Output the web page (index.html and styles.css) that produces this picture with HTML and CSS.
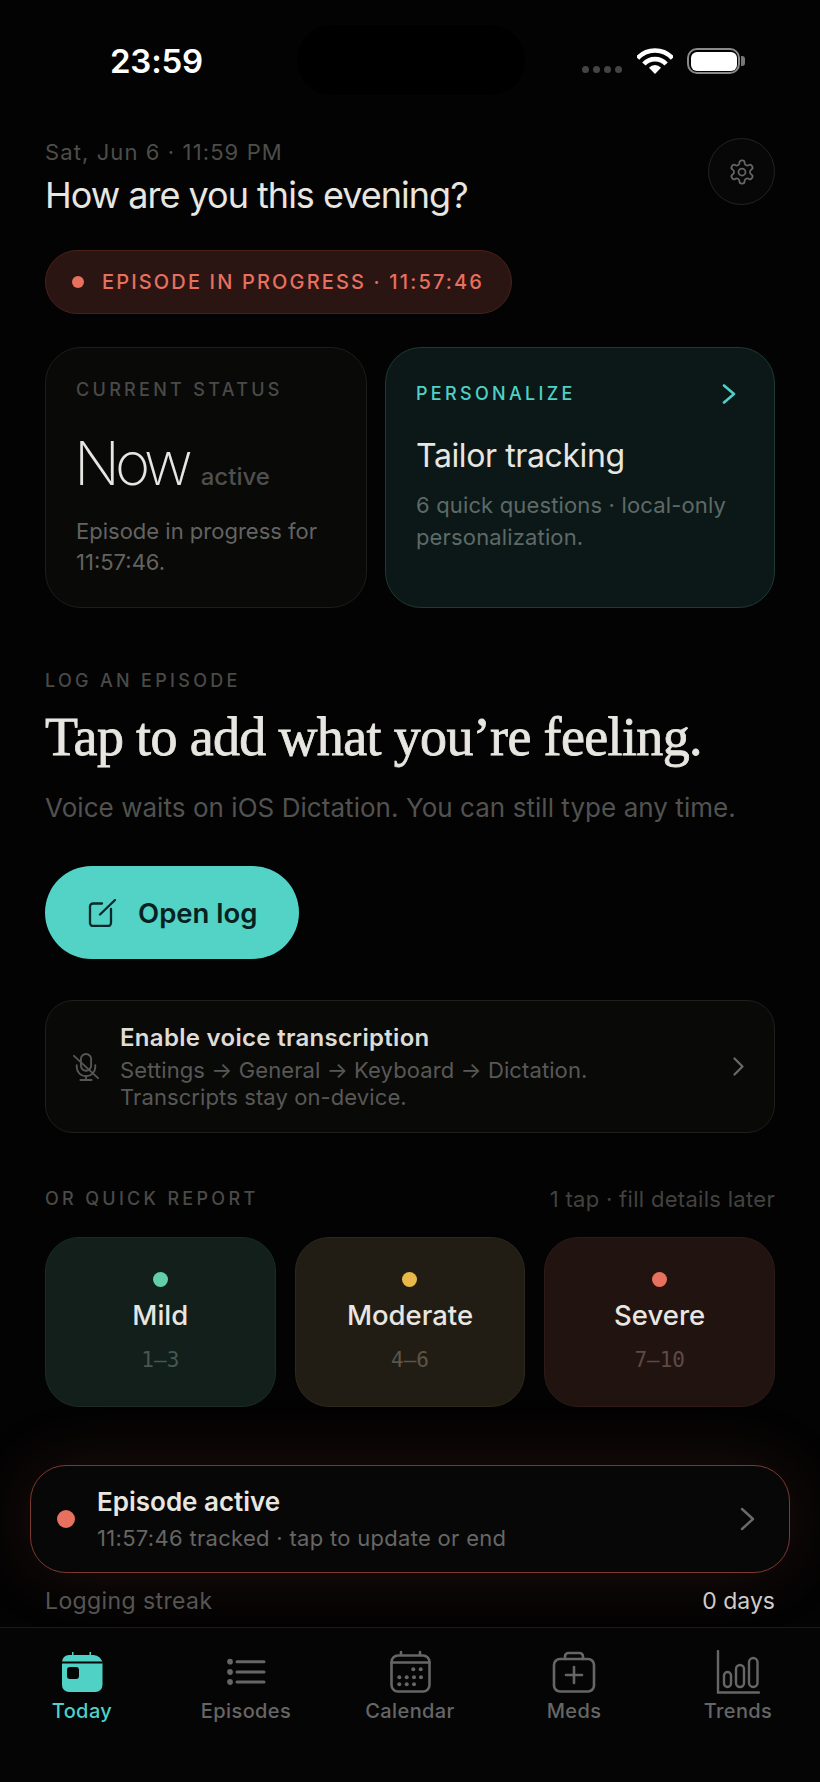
FILE: index.html
```html
<!DOCTYPE html>
<html lang="en">
<head>
    <meta charset="UTF-8">
    <meta name="viewport" content="width=device-width, initial-scale=1.0">
    <title>Today</title>
    <link rel="stylesheet" href="styles.css">
</head>
<body>
    <div class="status-bar">
        <div class="clock">23:59</div>
        <div class="island"></div>
        <div class="status-icons">
            <div class="signal"><span></span><span></span><span></span><span></span></div>
            <svg class="wifi" viewBox="0 0 36 26">
                <path d="M.5 10.300A23.500 23.500 0 0 1 35.500 10.300" fill="none" stroke="#fff" stroke-width="4.600"/>
                <path d="M6.900 16A15 15 0 0 1 29.100 16" fill="none" stroke="#fff" stroke-width="4.600"/>
                <path d="M18 26L12 19.800A8 8 0 0 1 24 19.800Z" fill="#fff"/>
            </svg>
            <div class="battery"><div class="battery-fill"></div></div>
            <div class="battery-nib"></div>
        </div>
    </div>

    <div class="main">
        <div class="header">
            <div>
                <div class="date">Sat, Jun 6 · 11:59 PM</div>
                <div class="greeting">How are you this evening?</div>
            </div>
            <div class="gear-button">
                <svg viewBox="0 0 24 24" width="28" height="28" fill="none" stroke="#666" stroke-width="1.500" stroke-linejoin="round">
                    <path d="M12.220 2h-.440a2 2 0 0 0-2 2v.180a2 2 0 0 1-1 1.730l-.430.250a2 2 0 0 1-2 0l-.150-.080a2 2 0 0 0-2.730.730l-.220.380a2 2 0 0 0 .730 2.730l.150.100a2 2 0 0 1 1 1.720v.510a2 2 0 0 1-1 1.740l-.150.090a2 2 0 0 0-.730 2.730l.220.380a2 2 0 0 0 2.730.730l.150-.080a2 2 0 0 1 2 0l.430.250a2 2 0 0 1 1 1.730V20a2 2 0 0 0 2 2h.440a2 2 0 0 0 2-2v-.180a2 2 0 0 1 1-1.730l.430-.250a2 2 0 0 1 2 0l.150.080a2 2 0 0 0 2.730-.730l.220-.390a2 2 0 0 0-.730-2.730l-.150-.080a2 2 0 0 1-1-1.740v-.500a2 2 0 0 1 1-1.740l.150-.090a2 2 0 0 0 .730-2.730l-.220-.380a2 2 0 0 0-2.730-.730l-.150.080a2 2 0 0 1-2 0l-.430-.250a2 2 0 0 1-1-1.730V4a2 2 0 0 0-2-2z"/>
                    <circle cx="12" cy="12" r="3"/>
                </svg>
            </div>
        </div>

        <div class="episode-pill">
            <span class="pill-dot"></span>
            <span>EPISODE IN PROGRESS · 11:57:46</span>
        </div>

        <div class="cards">
            <div class="card card-status">
                <div class="eyebrow">CURRENT STATUS</div>
                <div class="now-row">
                    <span class="now">Now</span>
                    <span class="now-label">active</span>
                </div>
                <div class="card-text">Episode in progress for 11:57:46.</div>
            </div>
            <div class="card card-personalize">
                <div class="personalize-top">
                    <div class="eyebrow eyebrow-teal">PERSONALIZE</div>
                    <svg viewBox="0 0 14 20" width="14" height="20" fill="none" stroke="#4fd1c5" stroke-width="2.600" stroke-linecap="round" stroke-linejoin="round">
                        <path d="M2 1.500L12 10L2 18.500"/>
                    </svg>
                </div>
                <div class="card-title">Tailor tracking</div>
                <div class="card-text card-text-teal">6 quick questions · local-only personalization.</div>
            </div>
        </div>

        <div class="eyebrow log-eyebrow">LOG AN EPISODE</div>
        <h1 class="log-title">Tap to add what you’re feeling.</h1>
        <div class="log-sub">Voice waits on iOS Dictation. You can still type any time.</div>

        <div class="open-log">
            <svg viewBox="0 0 28 28" width="28" height="28" fill="none" stroke="#07292a" stroke-width="2.300" stroke-linecap="round">
                <path d="M14 4.500H5a3 3 0 0 0-3 3V24a3 3 0 0 0 3 3h15a3 3 0 0 0 3-3V10"/>
                <path d="M12 15.500L27 1"/>
            </svg>
            <span>Open log</span>
        </div>

        <div class="voice-card">
            <svg class="mic" viewBox="0 0 28 30" width="26" height="28" fill="none" stroke="#575757" stroke-width="2" stroke-linecap="round">
                <rect x="8.500" y="1" width="11" height="18" rx="5.500"/>
                <path d="M4 13v2a10 10 0 0 0 20 0v-2"/>
                <path d="M14 25v4M8 29h12"/>
                <path d="M1 3L27 27"/>
            </svg>
            <div class="voice-text">
                <div class="voice-title">Enable voice transcription</div>
                <div class="voice-sub">Settings → General → Keyboard → Dictation.<br>Transcripts stay on-device.</div>
            </div>
            <svg viewBox="0 0 11 19" width="11" height="19" fill="none" stroke="#6a6a6a" stroke-width="2.200" stroke-linecap="round" stroke-linejoin="round">
                <path d="M1.500 1.500L9.500 9.500L1.500 17.500"/>
            </svg>
        </div>

        <div class="quick-header">
            <div class="eyebrow">OR QUICK REPORT</div>
            <div class="quick-note">1 tap · fill details later</div>
        </div>

        <div class="severity-grid">
            <div class="severity severity-mild">
                <span class="severity-dot"></span>
                <div class="severity-name">Mild</div>
                <div class="severity-range">1–3</div>
            </div>
            <div class="severity severity-moderate">
                <span class="severity-dot"></span>
                <div class="severity-name">Moderate</div>
                <div class="severity-range">4–6</div>
            </div>
            <div class="severity severity-severe">
                <span class="severity-dot"></span>
                <div class="severity-name">Severe</div>
                <div class="severity-range">7–10</div>
            </div>
        </div>

        <div class="active-banner">
            <span class="active-dot"></span>
            <div class="active-text">
                <div class="active-title">Episode active</div>
                <div class="active-sub">11:57:46 tracked · tap to update or end</div>
            </div>
            <svg viewBox="0 0 15 24" width="15" height="24" fill="none" stroke="#6a6a6a" stroke-width="2.400" stroke-linecap="round" stroke-linejoin="round">
                <path d="M2 2L13 12L2 22"/>
            </svg>
        </div>

        <div class="streak">
            <span class="streak-label">Logging streak</span>
            <span class="streak-value">0 days</span>
        </div>
    </div>

    <div class="tab-bar">
        <div class="tab tab-active">
            <svg viewBox="0 0 44 44" width="44" height="44">
                <path d="M10 5h2V2h1.500v3h16V2H31v3h2.500a9 9 0 0 1 9 9v21a7 7 0 0 1-7 7H9a7 7 0 0 1-7-7V12a7 7 0 0 1 7-7z" fill="#4fd1c5"/>
                <path d="M2 12.500H42.500" stroke="#050505" stroke-width="1.800"/>
                <rect x="7" y="17" width="12" height="12" rx="3" fill="#050505"/>
            </svg>
            <span>Today</span>
        </div>
        <div class="tab">
            <svg viewBox="0 0 44 44" width="44" height="44" fill="#666" stroke="#666" stroke-width="3" stroke-linecap="round">
                <circle cx="6" cy="11.700" r="1.400"/>
                <circle cx="6" cy="22" r="1.400"/>
                <circle cx="6" cy="32" r="1.400"/>
                <path d="M13 11.700H40M13 22H40M13 32H40"/>
            </svg>
            <span>Episodes</span>
        </div>
        <div class="tab">
            <svg viewBox="0 0 44 44" width="44" height="44" fill="none" stroke="#666" stroke-width="2.600" stroke-linecap="round">
                <rect x="3.500" y="5.500" width="38" height="36" rx="6.500"/>
                <path d="M3.500 12.500H41.500M13 2V5M32 2V5"/>
                <g fill="#666" stroke="none">
                    <circle cx="25.300" cy="19.300" r="2"/>
                    <circle cx="32.700" cy="19.300" r="2"/>
                    <circle cx="11.300" cy="27.300" r="2"/>
                    <circle cx="18.700" cy="27.300" r="2"/>
                    <circle cx="26" cy="27.300" r="2"/>
                    <circle cx="33" cy="27.300" r="2"/>
                    <circle cx="11.300" cy="34.300" r="2"/>
                    <circle cx="18.700" cy="34.300" r="2"/>
                    <circle cx="26" cy="34.300" r="2"/>
                </g>
            </svg>
            <span>Calendar</span>
        </div>
        <div class="tab">
            <svg viewBox="0 0 44 44" width="44" height="44" fill="none" stroke="#666" stroke-width="2.600" stroke-linecap="round">
                <rect x="2" y="9" width="40" height="32.500" rx="6"/>
                <path d="M13 9V6.500a3.500 3.500 0 0 1 3.500-3.500h11a3.500 3.500 0 0 1 3.500 3.500V9"/>
                <path d="M22 17V33M14 25H30"/>
            </svg>
            <span>Meds</span>
        </div>
        <div class="tab">
            <svg viewBox="0 0 44 44" width="44" height="44" fill="none" stroke="#666" stroke-width="2.400" stroke-linecap="round">
                <path d="M2 1V42.500H43"/>
                <rect x="8" y="22" width="7" height="15" rx="3.500"/>
                <rect x="20" y="15" width="8" height="22" rx="4"/>
                <rect x="33" y="8" width="8.500" height="29" rx="4.250"/>
            </svg>
            <span>Trends</span>
        </div>
    </div>
</body>
</html>
```

FILE: styles.css
```css
body {
    font-family: Inter, "Noto Sans", sans-serif;
    background-color: #030303;
    color: #e8e6e1;
    width: 820px;
    height: 1782px;
    margin: 0;
    overflow: hidden;
    display: flex;
    flex-direction: column;
}

/* status bar */
.status-bar {
    position: relative;
    height: 122px;
    flex: none;
    display: flex;
    justify-content: space-between;
    align-items: center;
    padding: 0 75px 0 110px;
}

.clock {
    font-size: 33px;
    font-weight: 600;
    letter-spacing: -0.2px;
    color: #fff;
}

.island {
    position: absolute;
    left: 297px;
    top: 25px;
    width: 228px;
    height: 70px;
    border-radius: 35px;
    background-color: #000;
}

.status-icons {
    display: flex;
    align-items: center;
}

.signal {
    display: flex;
    gap: 4px;
    margin: 16px 15px 0 0;
}

.signal span {
    width: 7px;
    height: 7px;
    border-radius: 50%;
    background-color: #444;
}

.wifi {
    width: 36px;
    height: 26px;
    margin-right: 14px;
}

.battery {
    width: 53px;
    height: 26px;
    box-sizing: border-box;
    border: 2.5px solid #8a8a8a;
    border-radius: 10px;
    padding: 1.5px;
}

.battery-fill {
    height: 100%;
    border-radius: 6px;
    background-color: #fff;
}

.battery-nib {
    width: 4px;
    height: 10px;
    margin-left: 1px;
    border-radius: 0 3px 3px 0;
    background-color: #777;
}

/* main column */
.main {
    flex: 1;
    padding: 16px 45px 0;
    display: flex;
    flex-direction: column;
}

.header {
    display: flex;
    justify-content: space-between;
    align-items: flex-start;
}

.date {
    font-size: 22px;
    line-height: 28px;
    letter-spacing: 1.1px;
    color: #4d4d4b;
}

.greeting {
    margin-top: 8px;
    font-size: 36px;
    line-height: 42px;
    letter-spacing: -1px;
    color: #e8e6e1;
}

.gear-button {
    width: 67px;
    height: 67px;
    box-sizing: border-box;
    border: 1px solid #232322;
    border-radius: 50%;
    background-color: #070707;
    display: flex;
    justify-content: center;
    align-items: center;
}

.episode-pill {
    align-self: flex-start;
    margin-top: 34px;
    width: 467px;
    height: 64px;
    box-sizing: border-box;
    padding-left: 26px;
    display: flex;
    align-items: center;
    gap: 18px;
    border: 1px solid #4a2119;
    border-radius: 32px;
    background-color: #2a1512;
    color: #e8705e;
    font-size: 20px;
    font-weight: 500;
    letter-spacing: 2.15px;
}

.pill-dot {
    width: 12px;
    height: 12px;
    border-radius: 50%;
    background-color: #e8705e;
}

/* two cards */
.cards {
    margin-top: 33px;
    height: 261px;
    flex: none;
    display: grid;
    grid-template-columns: 322px 390px;
    gap: 18px;
}

.card {
    box-sizing: border-box;
    border-radius: 36px;
    padding: 0 30px;
}

.card-status {
    background-color: #090908;
    border: 1px solid #1d1d1b;
    padding-top: 32px;
}

.card-personalize {
    background-color: #0c1817;
    border: 1px solid #1d3a34;
    padding-top: 36px;
}

.eyebrow {
    font-size: 18px;
    line-height: 20px;
    font-weight: 500;
    letter-spacing: 3.3px;
    color: #4a4a48;
}

.eyebrow-teal {
    color: #4fd1c5;
}

.now-row {
    margin-top: 26px;
    display: flex;
    align-items: baseline;
    gap: 13px;
}

.now {
    margin-left: -2px;
    font-size: 60px;
    line-height: 74px;
    font-weight: 200;
    letter-spacing: -5px;
    color: #e8e6e1;
}

.now-label {
    font-size: 24px;
    font-weight: 500;
    color: #504f4d;
}

.card-text {
    margin-top: 16px;
    font-size: 22px;
    line-height: 31px;
    color: #636361;
}

.card-text-teal {
    margin-top: 11px;
    line-height: 32px;
    letter-spacing: 0.15px;
    color: #5d6a67;
}

.personalize-top {
    display: flex;
    justify-content: space-between;
    align-items: center;
    padding-right: 8px;
}

.card-title {
    margin-top: 30px;
    font-size: 32px;
    line-height: 44px;
    letter-spacing: -0.4px;
    color: #e8e6e1;
}

/* log section */
.log-eyebrow {
    margin-top: 63px;
}

.log-title {
    margin: 16px 0 0;
    font-family: "Liberation Serif", serif;
    font-size: 54px;
    line-height: 60px;
    font-weight: 400;
    letter-spacing: -0.65px;
    color: #e8e6e1;
    -webkit-text-stroke: 0.8px #e8e6e1;
}

.log-sub {
    margin-top: 25px;
    font-size: 26px;
    line-height: 32px;
    letter-spacing: 0.05px;
    color: #525250;
    white-space: nowrap;
}

.open-log {
    align-self: flex-start;
    margin-top: 42px;
    width: 254px;
    height: 93px;
    flex: none;
    box-sizing: border-box;
    padding-left: 43px;
    display: flex;
    align-items: center;
    gap: 22px;
    border-radius: 47px;
    background-color: #52d3c6;
    color: #06211f;
    font-size: 27.5px;
    font-weight: 600;
}

.voice-card {
    margin-top: 41px;
    height: 133px;
    flex: none;
    box-sizing: border-box;
    padding: 0 30px 0 27px;
    display: flex;
    align-items: center;
    border: 1px solid #1f1f1d;
    border-radius: 28px;
    background-color: #090908;
}

.mic {
    flex: none;
}

.voice-text {
    flex: 1;
    margin-left: 21px;
}

.voice-title {
    font-size: 24px;
    line-height: 30px;
    font-weight: 600;
    letter-spacing: 0.3px;
    color: #dedcd7;
}

.voice-sub {
    margin-top: 4px;
    font-size: 22px;
    line-height: 27px;
    letter-spacing: 0.1px;
    color: #585856;
}

.quick-header {
    margin-top: 54px;
    display: flex;
    justify-content: space-between;
    align-items: center;
    height: 24px;
    flex: none;
}

.quick-note {
    font-size: 22px;
    letter-spacing: 0.3px;
    color: #424240;
}

.severity-grid {
    margin-top: 26px;
    height: 170px;
    flex: none;
    display: grid;
    grid-template-columns: repeat(3, 1fr);
    gap: 19px;
}

.severity {
    box-sizing: border-box;
    padding-top: 34px;
    display: flex;
    flex-direction: column;
    align-items: center;
    border-radius: 34px;
}

.severity-mild {
    background-color: #121f1a;
    border: 1px solid #1a2c25;
}

.severity-moderate {
    background-color: #221d14;
    border: 1px solid #2e281c;
}

.severity-severe {
    background-color: #211310;
    border: 1px solid #2e1b17;
}

.severity-dot {
    width: 15px;
    height: 15px;
    border-radius: 50%;
}

.severity-mild .severity-dot {
    background-color: #62cfa8;
}

.severity-moderate .severity-dot {
    background-color: #e8b84a;
}

.severity-severe .severity-dot {
    background-color: #e8705e;
}

.severity-name {
    margin-top: 10px;
    font-size: 27.5px;
    line-height: 36px;
    font-weight: 500;
    color: #e8e6e1;
}

.severity-range {
    margin-top: 15px;
    font-family: "DejaVu Sans Mono", monospace;
    font-size: 21px;
    line-height: 24px;
}

.severity-mild .severity-range {
    color: #46584f;
}

.severity-moderate .severity-range {
    color: #5c5548;
}

.severity-severe .severity-range {
    color: #5e4a44;
}

/* active episode banner */
.active-banner {
    margin: 58px -15px 0;
    height: 108px;
    flex: none;
    box-sizing: border-box;
    padding: 0 34px 0 26px;
    display: flex;
    align-items: center;
    border: 1px solid #7a3a2f;
    border-radius: 36px;
    background-color: #080707;
    box-shadow: 0 0 70px rgba(232, 112, 94, 0.13);
}

.active-dot {
    width: 18px;
    height: 18px;
    flex: none;
    border-radius: 50%;
    background-color: #e8705e;
}

.active-text {
    flex: 1;
    margin-left: 22px;
}

.active-title {
    font-size: 26px;
    line-height: 32px;
    font-weight: 600;
    color: #e8e6e1;
}

.active-sub {
    margin-top: 6px;
    font-size: 22px;
    line-height: 28px;
    letter-spacing: 0.3px;
    color: #666664;
}

.streak {
    margin-top: 14px;
    display: flex;
    justify-content: space-between;
    font-size: 23px;
    line-height: 28px;
    color: #575553;
}

.streak-label {
    letter-spacing: 0.4px;
}

.streak-value {
    color: #cfcdc8;
}

/* bottom tabs */
.tab-bar {
    height: 155px;
    flex: none;
    box-sizing: border-box;
    padding-top: 22px;
    display: grid;
    grid-template-columns: repeat(5, 1fr);
    border-top: 1px solid #1b1b1a;
    background-color: #050505;
}

.tab {
    display: flex;
    flex-direction: column;
    align-items: center;
    gap: 4px;
    font-size: 20px;
    line-height: 26px;
    font-weight: 500;
    letter-spacing: 0.4px;
    color: #666;
}

.tab-active {
    color: #4fd1c5;
}
```
